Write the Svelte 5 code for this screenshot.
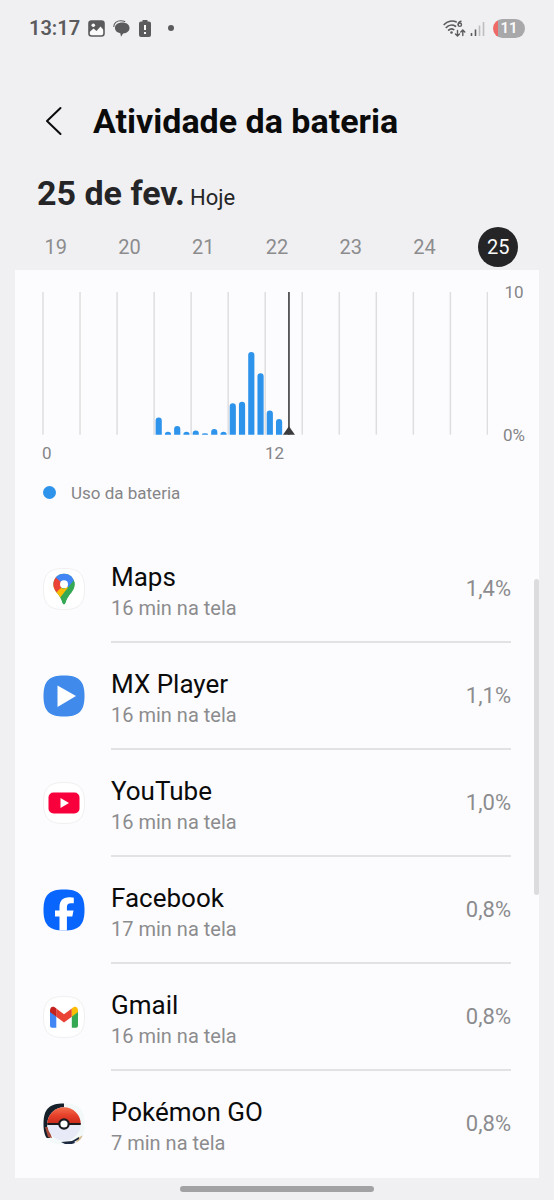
<script lang="ts">
	type App = {
		id: string;
		name: string;
		time: string;
		percent: string;
	};

	const days = [19, 20, 21, 22, 23, 24, 25];
	let selected = $state(25);

	// battery use per half hour, starting at 06:00, in tenths of a percent
	const usage = [12, 2, 6, 2, 3, 1, 4, 2, 22, 23, 58, 43, 17, 11];
	const firstSlot = 12;
	const slotWidth = 9.28;
	const plotHeight = 143;
	const now = 247.5;

	const gridLines = Array.from({ length: 13 }, (_, i) => 1 + i * slotWidth * 4);

	const apps: App[] = [
		{ id: 'maps', name: 'Maps', time: '16 min na tela', percent: '1,4%' },
		{ id: 'mx', name: 'MX Player', time: '16 min na tela', percent: '1,1%' },
		{ id: 'youtube', name: 'YouTube', time: '16 min na tela', percent: '1,0%' },
		{ id: 'facebook', name: 'Facebook', time: '17 min na tela', percent: '0,8%' },
		{ id: 'gmail', name: 'Gmail', time: '16 min na tela', percent: '0,8%' },
		{ id: 'pokemon', name: 'Pokémon GO', time: '7 min na tela', percent: '0,8%' }
	];

	const squircle = 'M21 .5C36 .5 41.5 6 41.5 21S36 41.5 21 41.5.5 36 .5 21 6 .5 21 .5Z';

	function barPath(value: number, i: number) {
		const h = (value / 100) * plotHeight;
		const x = 1 + (firstSlot + i) * slotWidth + 1.5;
		const r = Math.min(3.1, h);
		const top = plotHeight - h;
		return `M${x} ${plotHeight}V${top + r}A3.1 ${r} 0 0 1 ${x + 6.2} ${top + r}V${plotHeight}Z`;
	}
</script>

<div class="screen">
	<div class="status">
		<span class="clock">13:17</span>
		<svg width="17" height="17" viewBox="0 0 17 17" aria-hidden="true">
			<rect x="1" y="1" width="15" height="15" rx="2.5" fill="#fafafa" stroke="#5b5b5d" stroke-width="1.6" />
			<path d="M1 1h15v9.5l-3.5-4-4 4.5-3-2.5L1 12.5Z" fill="#5b5b5d" />
			<circle cx="5.3" cy="5.2" r="1.8" fill="#fafafa" />
		</svg>
		<svg width="17" height="17" viewBox="0 0 17 17" aria-hidden="true">
			<path d="M9.3 2.6c4.200 0 7.200 2.200 7.200 5.400s-2.700 5.300-6.400 5.400L8 16.800l-.7-3.500C4 12.700 1.900 10.600 1.900 8c0-3.200 3.200-5.400 7.400-5.400Z" fill="#5b5b5d" />
			<path d="M.8 6.500C.8 3 3.800.8 7.500.8c2 0 3.300.3 4.300.8" fill="none" stroke="#5b5b5d" stroke-width="1.1" stroke-linecap="round" />
		</svg>
		<svg width="14" height="17" viewBox="0 0 14 17" aria-hidden="true">
			<path d="M4.5 0h5v1.5H11a2 2 0 0 1 2 2V15a2 2 0 0 1-2 2H3a2 2 0 0 1-2-2V3.5a2 2 0 0 1 2-2h1.5Z" fill="#5b5b5d" />
			<path d="M7 5v5M7 12v2" stroke="#fafafa" stroke-width="2" />
		</svg>
		<span class="more"></span>
		<div class="radio">
			<svg width="23" height="19" viewBox="0 0 23 19" aria-hidden="true">
				<g fill="none" stroke="#5b5b5d" stroke-width="1.7" stroke-linecap="round">
					<path d="M1.2 5.5C4.5 2 9.5 1.2 13 2.8M3.3 8.500c2.500-2.600 6.300-3 9.200-1.200M5.700 11.200c1.500-1.500 3.500-1.600 5-.6" />
					<path d="M18 2.2c-1.5.3-2.8 1.8-2.8 3.5M14.5 11.5V17m-2-2 2 2 2-2M19.8 16.5V11m-2 2 2-2 2 2" stroke-width="1.4" />
					<circle cx="16.8" cy="5.7" r="1.7" stroke-width="1.4" />
				</g>
				<circle cx="8.5" cy="13.5" r="1.3" fill="#5b5b5d" />
			</svg>
			<svg width="15" height="17" viewBox="0 0 15 17" aria-hidden="true">
				<path d="M1.5 13v3M5.5 9.5V16" stroke="#5b5b5d" stroke-width="1.6" />
				<path d="M9.5 5.5V16M13.5 2V16" stroke="#bdbdbf" stroke-width="1.6" />
			</svg>
			<span class="battery">11</span>
		</div>
	</div>

	<header>
		<button class="back" aria-label="Voltar">
			<svg width="18" height="30" viewBox="0 0 18 30" aria-hidden="true">
				<path d="M15.5 2 2 15l13.5 13" fill="none" stroke="#0b0b0c" stroke-width="2" stroke-linecap="round" stroke-linejoin="round" />
			</svg>
		</button>
		<h1>Atividade da bateria</h1>
	</header>

	<div class="date">
		<h2>{selected} de fev.</h2>
		<span>Hoje</span>
	</div>

	<nav class="days">
		{#each days as day}
			<button class:selected={day === selected} onclick={() => (selected = day)}>{day}</button>
		{/each}
	</nav>

	<main>
		<div class="chart">
			<svg class="plot" viewBox="0 0 447 143" role="img" aria-label="Uso da bateria">
				{#each gridLines as x}
					<path d="M{x} 0V143" stroke="#dedee0" stroke-width="1.5" />
				{/each}
				{#each usage as value, i}
					<path d={barPath(value, i)} fill="#2e93ea" />
				{/each}
				<path d="M{now} 0V143" stroke="#3b3b3d" stroke-width="1.6" />
				<path d="M{now - 6} 143L{now} 134.5L{now + 6} 143Z" fill="#3b3b3d" />
			</svg>
			<div class="scale">
				<span>10</span>
				<span>0%</span>
			</div>
			<div class="hours">
				<span>0</span>
				<span>12</span>
			</div>
		</div>

		<div class="legend"><i></i>Uso da bateria</div>

		<ul>
			{#each apps as app}
				<li>
					<svg class="app-icon" viewBox="0 0 42 42" aria-hidden="true">
						{#if app.id === 'mx'}
							<path d={squircle} fill="#3f8aea" />
							<path d="M14.5 10.5 33 21 14.5 32Z" fill="#fff" />
						{:else if app.id === 'facebook'}
							<path d={squircle} fill="#0866ff" />
							<path d="M16.5 41.4V27.5H12v-6h4.5v-3c0-7 3.200-10.300 9.800-10.300 1.700 0 3.500.2 4.500.5v5.600c-1-.1-1.900-.1-2.900-.1-3 0-4 1.200-4 4.200v3.100h6.600l-1.200 6h-5.400v13.900c-2.500.1-4.900.1-7.400 0Z" fill="#fff" />
						{:else if app.id === 'pokemon'}
							<clipPath id="pokemon-shape">
								<path d={squircle} />
							</clipPath>
							<linearGradient id="ball-top" x1="0" y1="0" x2="0" y2="1">
								<stop offset="0" stop-color="#f4704d" />
								<stop offset=".5" stop-color="#e6402a" />
								<stop offset="1" stop-color="#c92a1c" />
							</linearGradient>
							<g clip-path="url(#pokemon-shape)">
								<path d="M0 0h42v42H0Z" fill="#f3f8f8" />
								<path d="M0 0h21v5L8 13 4 24l3 11H0Z" fill="#16202b" />
								<path d="M2 24h3l4 11-4-1Z" fill="#a64938" />
								<path d="m34 35 7-3v4l-8 5Z" fill="#d5bd91" />
								<path d="m18 39 11-1 7-4v2l-5 3 3 2H22Z" fill="#1c2941" />
								<circle cx="21" cy="21" r="16.7" fill="#e9eaf8" />
								<path d="M4.3 21a16.7 16.7 0 0 1 33.400 0Z" fill="url(#ball-top)" />
								<path d="M4.3 21h33.4" stroke="#1b1b1e" stroke-width="2" />
								<circle cx="21" cy="21" r="4.7" fill="#fff" stroke="#1b1b1e" stroke-width="2.2" />
							</g>
						{:else}
							<path d={squircle} fill="#fff" stroke="#efeff1" />
							{#if app.id === 'maps'}
								<clipPath id="pin-shape">
									<path d="M21 5.7c6 0 10.6 4.7 10.6 10.6 0 4.300-2.300 7.200-4.900 10.300-2.300 2.900-3.500 5.500-4.300 8.400-.5 1.800-2.300 1.800-2.800 0-.8-2.900-2-5.500-4.300-8.400-2.600-3.100-4.900-6-4.900-10.300C10.400 10.400 15 5.700 21 5.700Z" />
								</clipPath>
								<g clip-path="url(#pin-shape)">
									<path d="M8 4h26v34H8Z" fill="#34a853" />
									<path d="M8 16 21 21 30 14 17 31 8 25Z" fill="#fbbc04" />
									<path d="M8 7 13 8.5 21 16 13 25 8 22Z" fill="#ea4335" />
									<path d="M12 9V3h15l3 5-9 10Z" fill="#4285f4" />
									<path d="m12.5 9.5 8.500 7-4.500 5Z" fill="#ea4335" />
									<path d="m27.5 7.5 5-2v8.500l-7 6-4.500-4Z" fill="#4285f4" />
									<path d="M34 10v9l-13 18-5-6 15-19Z" fill="#34a853" />
								</g>
								<circle cx="21" cy="16.3" r="4" fill="#fff" />
							{:else if app.id === 'youtube'}
								<rect x="5.5" y="10.5" width="31" height="21" rx="5" fill="#f8003c" />
								<path d="m17.5 16 8.500 5-8.500 5Z" fill="#fff" />
							{:else}
								<path d="M7 14.5h6.3v17.200H9a2 2 0 0 1-2-2Z" fill="#4285f4" />
								<path d="M28.8 14.5H35v15.200a2 2 0 0 1-2 2h-4.200Z" fill="#34a853" />
								<path d="m13.3 12.500 7.700 5.800 7.800-5.800v8.300L21 26.500l-7.700-5.700Z" fill="#ea4335" />
								<path d="M7 14.5c0-4 3.500-5 6.300-2v8.300L7 16Z" fill="#c5221f" />
								<path d="M35 14.5c0-4-3.500-5-6.200-2v8.300L35 16Z" fill="#fbbc04" />
							{/if}
						{/if}
					</svg>
					<div class="row">
						<div class="text">
							<h3>{app.name}</h3>
							<p>{app.time}</p>
						</div>
						<span class="percent">{app.percent}</span>
					</div>
				</li>
			{/each}
		</ul>
		<span class="scrollbar"></span>
	</main>

	<footer><span></span></footer>
</div>

<style>
	:global(body) {
		background: #f0f0f2;
	}

	.screen {
		font-family: Roboto, 'Liberation Sans', sans-serif;
		color: #0b0b0c;
		min-height: 100vh;
		display: flex;
		flex-direction: column;
	}

	button {
		font: inherit;
		border: 0;
		padding: 0;
		background: none;
		cursor: pointer;
	}

	h1,
	h2,
	h3,
	p,
	ul {
		margin: 0;
		padding: 0;
	}

	.status {
		display: flex;
		align-items: center;
		gap: 8px;
		height: 56px;
		padding: 0 29px;
		color: #5b5b5d;
	}

	.clock {
		font-size: 20px;
		font-weight: 600;
	}

	.more {
		width: 6px;
		height: 6px;
		margin-left: 8px;
		border-radius: 50%;
		background: #5b5b5d;
	}

	.radio {
		display: flex;
		align-items: center;
		gap: 4px;
		margin-left: auto;
	}

	.battery {
		width: 32px;
		margin-left: 4px;
		border-radius: 10px;
		background: linear-gradient(90deg, #ef6a66 5px, #a8a8aa 5px);
		color: #fafafa;
		font-size: 15px;
		font-weight: 600;
		line-height: 19px;
		text-align: center;
	}

	header {
		display: flex;
		align-items: center;
		gap: 28px;
		padding: 45px 45px 32px;
	}

	.back {
		display: flex;
		width: 20px;
	}

	h1 {
		font-size: 34px;
		font-weight: 700;
		line-height: 40px;
	}

	.date {
		display: flex;
		align-items: baseline;
		gap: 5px;
		padding: 0 37px;
		color: #252527;
		font-size: 22px;
		line-height: 40px;
	}

	h2 {
		font-size: 34px;
		font-weight: 700;
	}

	.days {
		display: grid;
		grid-template-columns: repeat(7, 1fr);
		justify-items: center;
		padding: 9px 19px 3px;
	}

	.days button {
		width: 40px;
		height: 40px;
		border-radius: 50%;
		color: #8c8c8e;
		font-size: 20px;
	}

	.days .selected {
		background: #252527;
		color: #fafafa;
	}

	main {
		position: relative;
		flex: 1;
		margin: 0 15px;
		background: #fcfcfe;
	}

	.chart {
		display: grid;
		grid-template-columns: 1fr 22px;
		column-gap: 15px;
		padding: 22px 14px 0 27px;
		color: #858587;
		font-size: 17px;
		line-height: 20px;
	}

	.plot {
		display: block;
		width: 100%;
	}

	.scale {
		display: flex;
		flex-direction: column;
		justify-content: space-between;
		align-items: center;
		margin: -10px 0;
	}

	.hours {
		display: grid;
		grid-template-columns: 1fr 1fr;
		padding-top: 8px;
	}

	.legend {
		display: flex;
		align-items: center;
		gap: 15px;
		padding: 20px 28px 0;
		color: #858587;
		font-size: 17px;
		line-height: 20px;
	}

	.legend i {
		width: 13px;
		height: 13px;
		border-radius: 50%;
		background: #2e93ea;
	}

	ul {
		list-style: none;
		padding: 33px 28px 0;
	}

	li {
		display: flex;
		align-items: center;
		gap: 26px;
	}

	.app-icon {
		width: 42px;
		height: 42px;
		flex: none;
	}

	.row {
		flex: 1;
		display: flex;
		align-items: center;
		justify-content: space-between;
		box-sizing: border-box;
		height: 107px;
		padding-top: 2px;
		border-bottom: 2px solid #e2e2e4;
	}

	li:last-child .row {
		border-color: transparent;
	}

	.text {
		padding-top: 6px;
	}

	h3 {
		font-size: 26px;
		font-weight: 400;
		line-height: 32px;
	}

	p {
		color: #8c8c8e;
		font-size: 20px;
		line-height: 30px;
	}

	.percent {
		color: #8c8c8e;
		font-size: 22px;
		line-height: 30px;
	}

	.scrollbar {
		position: absolute;
		top: 309px;
		right: 0;
		width: 5px;
		height: 316px;
		border-radius: 3px;
		background: #dcdcde;
	}

	footer {
		display: flex;
		justify-content: center;
		align-items: center;
		height: 23px;
	}

	footer span {
		width: 35%;
		height: 6px;
		border-radius: 3px;
		background: #a2a2a4;
	}
</style>
